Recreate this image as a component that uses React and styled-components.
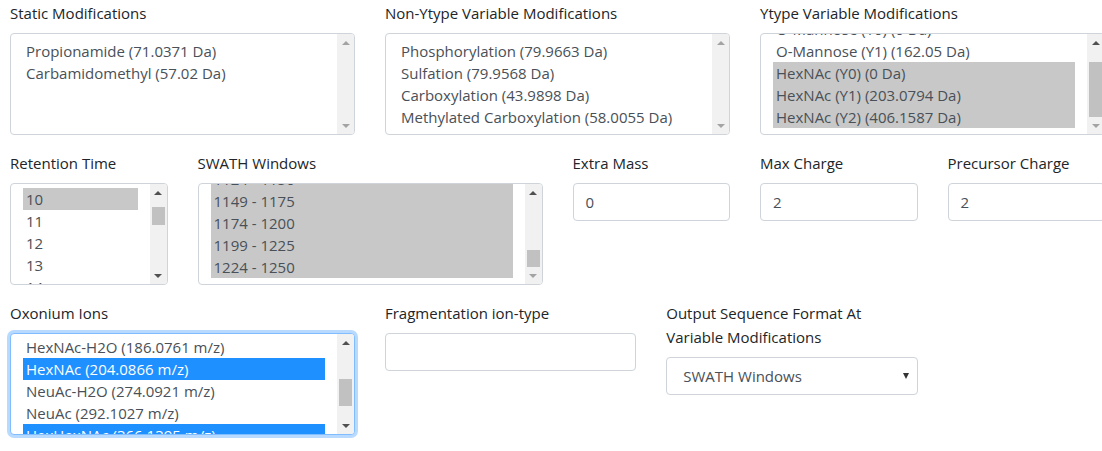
import React from "react";
import styled, { createGlobalStyle, css } from "styled-components";

const GlobalStyle = createGlobalStyle`
  html, body {
    margin: 0;
    padding: 0;
    background: #fff;
    overflow: hidden;
  }
  body {
    font-family: "Open Sans", "Noto Sans", sans-serif;
    font-size: 15px;
    color: #212529;
  }
`;

const Page = styled.div`
  padding: 2px 0 0 10px;
`;

const FormRow = styled.div`
  display: grid;
  grid-template-columns: repeat(12, 63.75px);
  column-gap: 30px;
  align-items: start;
`;

const Group = styled.div`
  grid-column: span ${(p) => p.span};
  margin-bottom: 17px;
  min-width: 0;
`;

const Label = styled.div`
  line-height: 22px;
  margin-bottom: 9px;
  white-space: nowrap;
  & + & {
    margin-top: 0;
  }
`;

const Box = styled.div`
  display: flex;
  height: 102px;
  box-sizing: border-box;
  border: 1px solid ${(p) => (p.focused ? "#80bdff" : "#ced4da")};
  border-radius: 4px;
  background: #fff;
  overflow: hidden;
  ${(p) =>
    p.focused &&
    css`
      box-shadow: 0 0 0 3px rgba(0, 123, 255, 0.28);
    `}
`;

const Viewport = styled.div`
  flex: 1;
  min-width: 0;
  overflow: hidden;
  padding: 0 12px;
`;

const List = styled.div`
  margin-top: ${(p) => 6 - p.offset}px;
`;

const Option = styled.div`
  height: 22px;
  line-height: 22px;
  padding-left: 3px;
  white-space: nowrap;
  overflow: hidden;
  color: #495057;
  ${(p) =>
    p.sel === "gray" &&
    css`
      background: #c8c8c8;
    `}
  ${(p) =>
    p.sel === "blue" &&
    css`
      background: #1e90ff;
      color: #fff;
    `}
`;

const Scrollbar = styled.div`
  width: 17px;
  flex: none;
  display: flex;
  flex-direction: column;
  background: #f1f1f1;
`;

const ArrowCell = styled.div`
  height: 17px;
  flex: none;
  display: flex;
  align-items: center;
  justify-content: center;
`;

const Tri = styled.span`
  width: 0;
  height: 0;
  border-left: 4px solid transparent;
  border-right: 4px solid transparent;
  ${(p) =>
    p.down
      ? css`
          border-top: 4px solid ${p.off ? "#a3a3a3" : "#505050"};
        `
      : css`
          border-bottom: 4px solid ${p.off ? "#a3a3a3" : "#505050"};
        `}
`;

const Track = styled.div`
  flex: 1;
  padding: 0 2px;
`;

const Thumb = styled.div`
  margin-top: ${(p) => p.top}px;
  height: ${(p) => p.h}px;
  background: #c1c1c1;
`;

const TextInput = styled.div`
  height: 38px;
  box-sizing: border-box;
  border: 1px solid #ced4da;
  border-radius: 4px;
  padding: 0 12px;
  line-height: 36px;
  color: #495057;
`;

const Select = styled.div`
  height: 38px;
  box-sizing: border-box;
  border: 1px solid #ced4da;
  border-radius: 4px;
  padding: 0 8px 0 16px;
  display: flex;
  align-items: center;
  justify-content: space-between;
  color: #495057;
`;

const Caret = styled.span`
  width: 0;
  height: 0;
  border-left: 3.5px solid transparent;
  border-right: 3.5px solid transparent;
  border-top: 6px solid #333;
`;

const TwoLineLabel = styled(Label)`
  line-height: 24px;
  margin-top: -1px;
  margin-bottom: 8px;
`;

function ListBox({ items, offset = 0, thumb, upOff, downOff, focused }) {
  return (
    <Box focused={focused}>
      <Viewport>
        <List offset={offset}>
          {items.map(([text, sel]) => (
            <Option key={text} sel={sel}>
              {text}
            </Option>
          ))}
        </List>
      </Viewport>
      <Scrollbar>
        <ArrowCell>
          <Tri off={upOff} />
        </ArrowCell>
        <Track>{thumb && <Thumb top={thumb[0]} h={thumb[1]} />}</Track>
        <ArrowCell>
          <Tri down off={downOff} />
        </ArrowCell>
      </Scrollbar>
    </Box>
  );
}

const staticMods = [["Propionamide (71.0371 Da)"], ["Carbamidomethyl (57.02 Da)"]];

const nonYtype = [
  ["Phosphorylation (79.9663 Da)"],
  ["Sulfation (79.9568 Da)"],
  ["Carboxylation (43.9898 Da)"],
  ["Methylated Carboxylation (58.0055 Da)"],
];

const ytype = [
  ["O-Mannose (Y0) (0 Da)"],
  ["O-Mannose (Y1) (162.05 Da)"],
  ["HexNAc (Y0) (0 Da)", "gray"],
  ["HexNAc (Y1) (203.0794 Da)", "gray"],
  ["HexNAc (Y2) (406.1587 Da)", "gray"],
];

const retention = [["9"], ["10", "gray"], ["11"], ["12"], ["13"], ["14"]];

const swath = [
  ["1124 - 1150", "gray"],
  ["1149 - 1175", "gray"],
  ["1174 - 1200", "gray"],
  ["1199 - 1225", "gray"],
  ["1224 - 1250", "gray"],
];

const oxonium = [
  ["Hex (163.0601 m/z)"],
  ["HexNAc-H2O (186.0761 m/z)"],
  ["HexNAc (204.0866 m/z)", "blue"],
  ["NeuAc-H2O (274.0921 m/z)"],
  ["NeuAc (292.1027 m/z)"],
  ["HexHexNAc (366.1395 m/z)", "blue"],
];

export default function App() {
  return (
    <Page>
      <GlobalStyle />
      <FormRow>
        <Group span={4}>
          <Label>Static Modifications</Label>
          <ListBox items={staticMods} upOff downOff />
        </Group>
        <Group span={4}>
          <Label>Non-Ytype Variable Modifications</Label>
          <ListBox items={nonYtype} upOff downOff />
        </Group>
        <Group span={4}>
          <Label>Ytype Variable Modifications</Label>
          <ListBox items={ytype} offset={22} thumb={[11, 55]} downOff />
        </Group>
      </FormRow>
      <FormRow>
        <Group span={2}>
          <Label>Retention Time</Label>
          <ListBox items={retention} offset={24} thumb={[6, 18]} />
        </Group>
        <Group span={4}>
          <Label>SWATH Windows</Label>
          <ListBox items={swath} offset={22} thumb={[49, 17]} downOff />
        </Group>
        <Group span={2}>
          <Label>Extra Mass</Label>
          <TextInput>0</TextInput>
        </Group>
        <Group span={2}>
          <Label>Max Charge</Label>
          <TextInput>2</TextInput>
        </Group>
        <Group span={2}>
          <Label>Precursor Charge</Label>
          <TextInput>2</TextInput>
        </Group>
      </FormRow>
      <FormRow>
        <Group span={4}>
          <Label>Oxonium Ions</Label>
          <ListBox items={oxonium} offset={26} thumb={[28, 27]} focused />
        </Group>
        <Group span={3}>
          <Label>Fragmentation ion-type</Label>
          <TextInput />
        </Group>
        <Group span={3}>
          <TwoLineLabel>
            Output Sequence Format At
            <br />
            Variable Modifications
          </TwoLineLabel>
          <Select>
            SWATH Windows
            <Caret />
          </Select>
        </Group>
      </FormRow>
    </Page>
  );
}
